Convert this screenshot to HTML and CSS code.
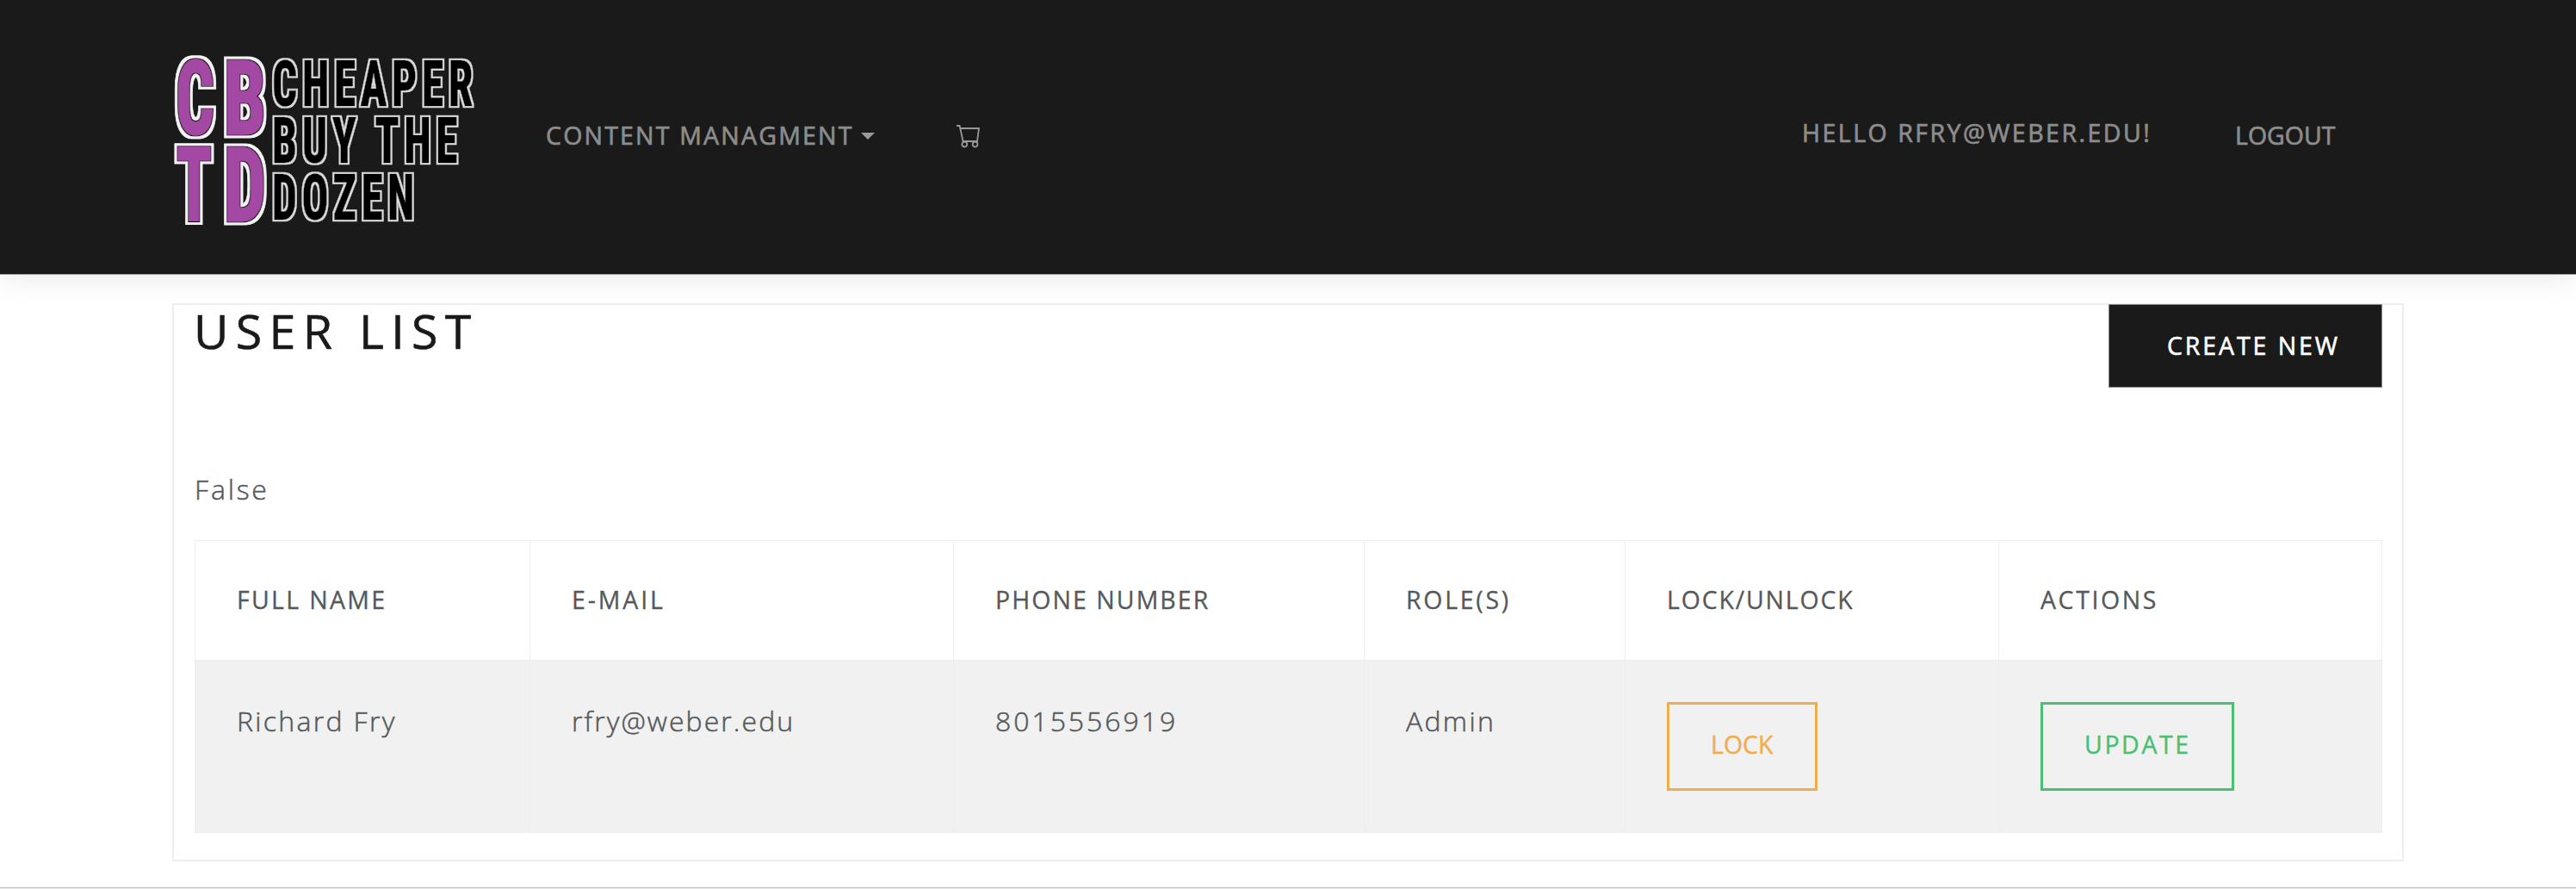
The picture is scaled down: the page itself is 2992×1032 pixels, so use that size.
FILE: index.html
```html
<!DOCTYPE html>
<html lang="en">
<head>
<meta charset="utf-8">
<title>User List</title>
<link rel="stylesheet" href="styles.css">
</head>
<body>
<header class="navbar">
  <a class="brand" aria-label="Cheaper Buy The Dozen">
    <svg class="logo" width="356" height="204" viewBox="0 0 356 204">
      <defs>
        <filter id="outline-thin" x="-5%" y="-5%" width="110%" height="110%">
          <feMorphology in="SourceAlpha" operator="dilate" radius="2" result="grown"/>
          <feFlood flood-color="#dadada"/>
          <feComposite in2="grown" operator="in" result="edge"/>
          <feMerge><feMergeNode in="edge"/><feMergeNode in="SourceGraphic"/></feMerge>
        </filter>
        <filter id="outline-thick" x="-5%" y="-5%" width="110%" height="110%">
          <feMorphology in="SourceAlpha" operator="dilate" radius="1" result="dark"/>
          <feMorphology in="SourceAlpha" operator="dilate" radius="4" result="grown"/>
          <feFlood flood-color="#f2f2f2"/>
          <feComposite in2="grown" operator="in" result="edge"/>
          <feMerge><feMergeNode in="edge"/><feMergeNode in="dark"/><feMergeNode in="SourceGraphic"/></feMerge>
        </filter>
      </defs>
      <g class="logo-initials" filter="url(#outline-thick)">
        <text x="4" y="94" textLength="45" lengthAdjust="spacingAndGlyphs">C</text>
        <text x="60" y="94" textLength="49" lengthAdjust="spacingAndGlyphs">B</text>
        <text x="5" y="195" textLength="41" lengthAdjust="spacingAndGlyphs">T</text>
        <text x="60" y="195" textLength="49" lengthAdjust="spacingAndGlyphs">D</text>
      </g>
      <g class="logo-words" filter="url(#outline-thin)">
        <text x="116" y="61" textLength="239" lengthAdjust="spacingAndGlyphs">CHEAPER</text>
        <text x="116" y="127" textLength="221" lengthAdjust="spacingAndGlyphs">BUY THE</text>
        <text x="116" y="193" textLength="171" lengthAdjust="spacingAndGlyphs">DOZEN</text>
      </g>
    </svg>
  </a>
  <nav class="nav-main">
    <a class="nav-link managment">CONTENT MANAGMENT</a>
    <span class="caret"></span>
    <svg class="cart" width="28" height="28" viewBox="0 0 28 28" fill="none" stroke="#999" stroke-width="1.8">
      <path d="M0 2h3.600l4 18h17.400M4.600 5h21.400l-2 15"/>
      <circle cx="9.300" cy="23.600" r="2.900"/><circle cx="21.600" cy="23.600" r="2.900"/>
    </svg>
  </nav>
  <nav class="nav-user">
    <a class="nav-link hello">HELLO RFRY@WEBER.EDU!</a>
    <a class="nav-link logout">LOGOUT</a>
  </nav>
</header>
<main class="card">
  <div class="card-head">
    <h1>USER LIST</h1>
    <a class="btn-create">CREATE NEW</a>
  </div>
  <p class="flag">False</p>
  <table class="users">
    <colgroup><col class="c-name"><col class="c-mail"><col class="c-phone"><col class="c-role"><col class="c-lock"><col class="c-act"></colgroup>
    <thead>
      <tr><th>FULL NAME</th><th class="t-mail">E-MAIL</th><th class="t-phone">PHONE NUMBER</th><th class="t-role">ROLE(S)</th><th class="t-lock">LOCK/UNLOCK</th><th class="t-act">ACTIONS</th></tr>
    </thead>
    <tbody>
      <tr><td>Richard Fry</td><td class="t-addr">rfry@weber.edu</td><td class="t-num">8015556919</td><td>Admin</td><td><a class="btn lock">LOCK</a></td><td><a class="btn update">UPDATE</a></td></tr>
    </tbody>
  </table>
</main>
<footer class="footer"></footer>
</body>
</html>
```
FILE: styles.css
```css
* { box-sizing: border-box; }

body {
  margin: 0;
  height: 1032px;
  overflow: hidden;
  display: flex;
  flex-direction: column;
  background: #fff;
  color: #55595c;
  font-family: "Open Sans", sans-serif;
  font-size: 32px;
  font-weight: 300;
  -webkit-text-stroke: .5px;
}

.navbar {
  flex: none;
  display: flex;
  height: 319px;
  padding: 0 200px;
  background: #1a1a1a;
  border-bottom: 1px solid #999;
  box-shadow: 0 4px 32px rgba(0, 0, 0, .09);
}

.brand { padding-top: 62px; }
.logo { display: block; overflow: visible; -webkit-text-stroke: 0; }
.logo text {
  font-family: Roboto, sans-serif;
  font-weight: 800;
  font-stretch: 75%;
}
.logo-initials { font-size: 120px; fill: #a349a4; stroke: #a349a4; stroke-width: 1; }
.logo-words { font-size: 74px; letter-spacing: 8px; fill: #000; stroke: #000; stroke-width: .6; }

.nav-main { display: flex; margin-left: 78px; }
.nav-link {
  font-size: 28.5px;
  font-weight: 500;
  line-height: 40px;
  white-space: nowrap;
  color: #8c8c8c;
  -webkit-text-stroke: .7px;
}
.managment { width: 357px; margin-top: 137px; letter-spacing: 2.2px; }
.caret {
  margin: 154px 0 0 9px;
  width: 16px;
  height: 0;
  border: 8px solid transparent;
  border-top-color: #999;
  border-bottom: 0;
}
.cart { margin: 144px 0 0 95px; }
.nav-user { display: flex; margin-left: auto; }
.hello { margin-top: 134px; width: 503px; letter-spacing: 2.5px; }
.logout { margin-top: 137px; width: 196px; letter-spacing: 0; }

.card {
  flex: none;
  width: 2592px;
  height: 648px;
  margin: 33px auto 0;
  padding: 0 24px;
  border: 2px solid #eee;
  background: #fff;
}
.card-head {
  display: flex;
  justify-content: space-between;
  align-items: flex-start;
  height: 180px;
}
h1 {
  margin: -7px 0 0 -1px;
  font-size: 55.5px;
  font-weight: 500;
  line-height: 74px;
  letter-spacing: 8.3px;
  color: #1a1a1a;
  -webkit-text-stroke: .6px;
}
.btn-create {
  display: flex;
  width: 318px;
  height: 97px;
  margin: -1px -1px 0 0;
  padding: 27px 0 0 67px;
  border: 1px solid #888;
  background: #1a1a1a;
  color: #fff;
  font-size: 28.5px;
  font-weight: 500;
  line-height: 40px;
  letter-spacing: 2.9px;
  -webkit-text-stroke: .6px;
}
.flag {
  height: 93px;
  margin: 0;
  padding-top: 12px;
  line-height: 44px;
  letter-spacing: 2.8px;
}

.users {
  width: 2540px;
  table-layout: fixed;
  border-collapse: collapse;
}
.c-name { width: 389px; }
.c-mail { width: 492px; }
.c-phone { width: 477px; }
.c-role { width: 303px; }
.c-lock { width: 434px; }
.c-act { width: 445px; }
th, td {
  padding: 0 0 0 48px;
  text-align: left;
  vertical-align: top;
  border: 1px solid #eee;
  white-space: nowrap;
}
th {
  height: 139px;
  padding-top: 48px;
  font-size: 28.5px;
  font-weight: 500;
  line-height: 40px;
  letter-spacing: 2.3px;
  -webkit-text-stroke: .3px;
}
td {
  height: 200px;
  padding-top: 48px;
  line-height: 44px;
  letter-spacing: 2.3px;
  background: #f1f1f1;
}
.t-mail { letter-spacing: 2.9px; }
.t-phone { letter-spacing: 2.05px; }
.t-role { letter-spacing: 2.7px; }
.t-lock { letter-spacing: 1.8px; }
.t-act { letter-spacing: 2.6px; }
.t-addr { letter-spacing: 2.05px; }
.t-num { letter-spacing: 2.95px; }

.btn {
  display: flex;
  height: 103px;
  padding: 26px 0 0 48px;
  border: 3px solid;
  font-size: 28.5px;
  font-weight: 500;
  line-height: 40px;
  -webkit-text-stroke: .4px;
}
.lock { width: 175px; color: #f0ad4e; letter-spacing: 0; }
.update { width: 225px; color: #4bbf73; letter-spacing: 2.6px; }

.footer {
  flex: none;
  height: 2px;
  margin-top: 30px;
  background: #eee;
  border-top: 1px solid #bbb;
}
```
